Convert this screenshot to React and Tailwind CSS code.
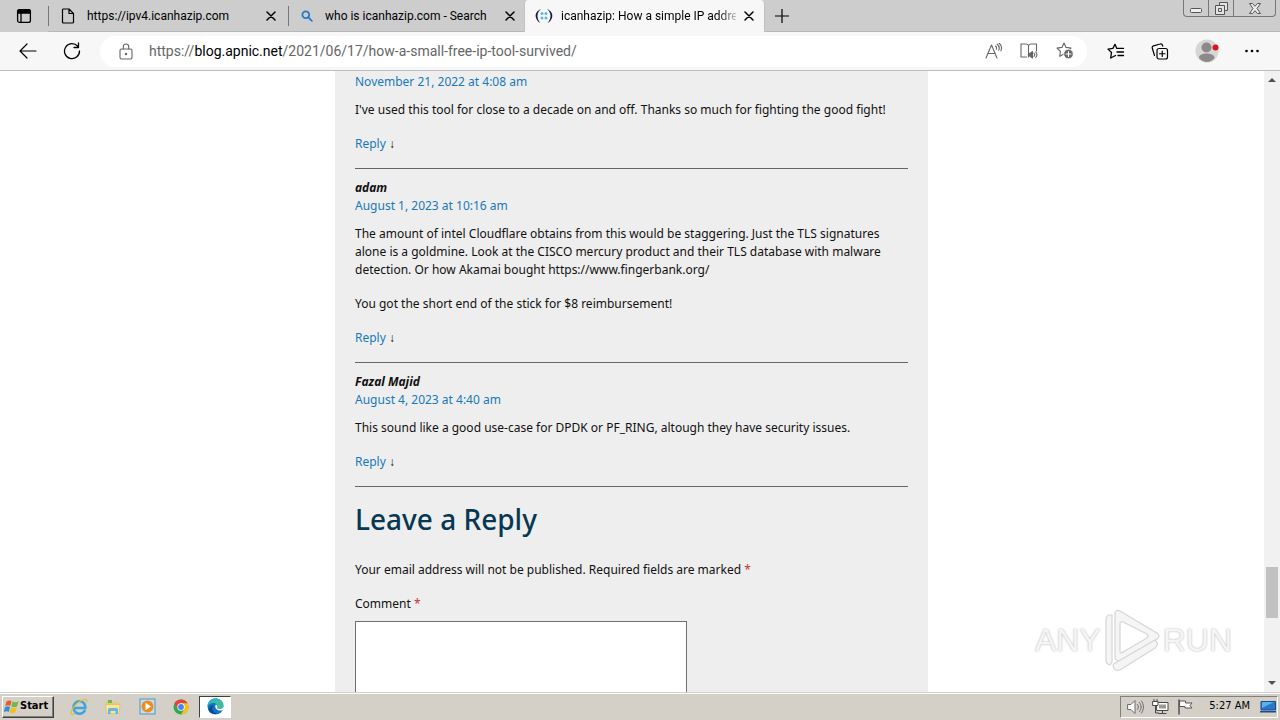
import React from "react";

const stroke = { fill: "none", stroke: "currentColor", strokeLinecap: "round", strokeLinejoin: "round" };

function CloseIcon() {
  return (
    <svg width="10" height="10" viewBox="0 0 10 10" {...stroke} strokeWidth="1.5">
      <path d="M1 1l8 8M9 1l-8 8" />
    </svg>
  );
}

function TabActionsIcon() {
  return (
    <svg width="16" height="16" viewBox="0 0 16 16" {...stroke} strokeWidth="1.3">
      <rect x="1.6" y="1.6" width="12.8" height="12.8" rx="2" />
      <path d="M1.6 3.6a2 2 0 012-2h8.800a2 2 0 012 2v1.400H1.600z" fill="currentColor" />
      <path d="M5 5v9" />
    </svg>
  );
}

function PageIcon() {
  return (
    <svg width="14" height="16" viewBox="0 0 14 16" {...stroke} strokeWidth="1.2">
      <path d="M2.500 1h5.500l4.500 4.500V14a1 1 0 01-1 1h-9a1 1 0 01-1-1V2a1 1 0 011-1zM8 1v4.500h4.500" />
    </svg>
  );
}

function SearchIcon() {
  return (
    <svg width="12" height="12" viewBox="0 0 12 12" {...stroke} stroke="#2b78c5" strokeWidth="1.8">
      <circle cx="4.800" cy="4.800" r="3.400" />
      <path d="M7.400 7.400l3.400 3.400" />
    </svg>
  );
}

function ApnicIcon() {
  return (
    <svg width="18" height="16" viewBox="0 0 18 16">
      <path d="M6 1C1.500 3 .200 6 .800 9c.4 2.600 2.200 4.800 4.700 6C3 12 2.400 10 2.500 7.500 2.600 5 3.800 3 6 1z" fill="#1c1a30" />
      <path d="M12 1c4.500 2 5.800 5 5.200 8-.4 2.600-2.200 4.800-4.700 6 2.500-3 3.100-5 3-7.500C15.400 5 14.200 3 12 1z" fill="#1c1a30" />
      <g fill="#5fb8e0">
        <circle cx="7" cy="5.500" r="1.500" /><circle cx="11" cy="5.500" r="1.500" />
        <circle cx="7" cy="10" r="1.500" /><circle cx="11" cy="10" r="1.500" />
      </g>
    </svg>
  );
}

function BackIcon() {
  return (
    <svg width="18" height="16" viewBox="0 0 18 16" {...stroke} strokeWidth="1.2">
      <path d="M8 1L1 8l7 7M1 8h16" />
    </svg>
  );
}

function ReloadIcon() {
  return (
    <svg width="18" height="18" viewBox="0 0 18 18" {...stroke} strokeWidth="1.3">
      <path d="M16.500 9A7.500 7.500 0 1114.500 4M15.500 1v4.500H11" />
    </svg>
  );
}

function LockIcon() {
  return (
    <svg width="14" height="17" viewBox="0 0 14 17" {...stroke} strokeWidth="1.1">
      <rect x="1" y="6" width="12" height="10" rx="1.500" />
      <path d="M4.300 6V3.700a2.700 2.700 0 015.400 0V6" />
      <circle cx="7" cy="11" r=".700" fill="currentColor" />
    </svg>
  );
}

function ReadAloudIcon() {
  return (
    <svg width="17" height="16" viewBox="0 0 17 16" {...stroke} strokeWidth="1.1">
      <path d="M1 15L6.500 2 12 15M3 10.500h7.200M10.500 3c1 .8 1.300 2 .8 3.200M12 1c2.200 1.700 2.700 4 1.700 6.200M14 0c2.400 2 3 5 1.900 7.800" />
    </svg>
  );
}

function ReaderIcon() {
  return (
    <svg width="18" height="16" viewBox="0 0 18 16" {...stroke} strokeWidth="1.100">
      <path d="M8.500 2.500C8 1.500 7 1 6 1H1v13h5.500M8.500 2.500C9 1.500 10 1 11 1h5.500v7M8.500 2.500V14" />
      <path d="M8.500 10.500H10l2.500-2v6.500L10 13H8.500z" fill="currentColor" />
      <path d="M14 10c.8 1 .8 2.500 0 3.500M15.800 9c1.300 1.600 1.300 4 0 5.500" />
    </svg>
  );
}

const starPath = "M8 1l2.100 4.400 4.900.700-3.500 3.400.800 4.800L8 12l-4.300 2.300.8-4.800L1 6.100l4.900-.7z";

function AddFavoriteIcon() {
  return (
    <svg width="18" height="18" viewBox="0 0 18 18" {...stroke} strokeWidth="1.100">
      <path d={starPath} />
      <circle cx="12.500" cy="12" r="4.800" fill="#666" stroke="#fff" strokeWidth=".800" />
      <path d="M12.500 9.500v5M10 12h5" stroke="#fff" />
    </svg>
  );
}

function FavoritesIcon() {
  return (
    <svg width="18" height="17" viewBox="0 0 18 17" {...stroke} strokeWidth="1.300">
      <path d="M9.800 5.400L8 1.300 5.900 5.400 1 6.100l3.500 3.400-.8 5.500L8.500 12.500M9.800 5.400H16.500M10 9h6.500M11 12.500h5.500" />
    </svg>
  );
}

function CollectionsIcon() {
  return (
    <svg width="18" height="17" viewBox="0 0 18 17" {...stroke} strokeWidth="1.200">
      <rect x="6" y="5.500" width="10.500" height="10.500" rx="2" />
      <path d="M11.250 8v5.500M8.500 10.750H14M3.500 12.500L1.300 5.300a2 2 0 011.300-2.500L9 1a2 2 0 012.500 1.300l.2.900" />
    </svg>
  );
}

function ProfileIcon() {
  return (
    <svg width="24" height="24" viewBox="0 0 24 24">
      <circle cx="12" cy="12" r="11.500" fill="#d6d6d2" />
      <circle cx="11.500" cy="8.500" r="5" fill="#8d8989" />
      <path d="M4 19c0-3 3-4.500 7.500-4.500S19.500 16 19.500 19c-2 2.500-5 4-7.500 4s-6-1.500-8-4z" fill="#8d8989" />
      <circle cx="20.500" cy="8.500" r="3" fill="#df1020" />
    </svg>
  );
}

function WindowsFlag() {
  return (
    <svg width="16" height="16" viewBox="0 0 16 16">
      <path d="M2.500 2.500C4.500 1 6 1.200 7.500 2L6.300 7C4.500 6 3 6.200 1.200 7.200z" fill="#ec5a24" />
      <path d="M8.500 2.500c2 1 4 .9 6-.3l-1.400 5c-2 1.200-3.800 1.200-5.800.2z" fill="#74b843" />
      <path d="M1 8.200c2-1.100 3.400-1.200 5-.2L4.800 13C3.200 12 1.700 12.200-.2 13.200z" fill="#2d8fd5" />
      <path d="M7 8.500c2 1 3.800 1 5.800-.2l-1.400 5c-2 1.200-3.800 1.200-5.700.2z" fill="#f6bb20" />
    </svg>
  );
}

function IeIcon() {
  return (
    <svg width="18" height="18" viewBox="0 0 18 18" fill="none">
      <path d="M15 12c-1 2.300-3 3.700-5.500 3.700-3.500 0-6-2.800-6-6.200s2.500-6.200 6-6.200 6 2.700 5.800 6.700H4.500" stroke="#3aa5df" strokeWidth="2.600" />
      <path d="M5 15.500c-2 1.700-4 1.700-4-.2C1 11 8 3 14 1.500c2.500-.6 3.500.8 2.500 3" stroke="#e8bc35" strokeWidth="1.200" />
    </svg>
  );
}

function ExplorerIcon() {
  return (
    <svg width="18" height="18" viewBox="0 0 18 18">
      <path d="M2 3h5l1 1.500h7V15H2z" fill="#e9ca68" />
      <path d="M4 2h4v3H4z" fill="#69b75a" />
      <path d="M1.500 6.500h14.500L15 15.500H2.500z" fill="#f8e59b" stroke="#d3b254" strokeWidth=".500" />
      <path d="M4 16v-4.500c0-1 1-1.500 2-1.500h6c1 0 2 .5 2 1.500V16h-2.500v-3h-5v3z" fill="#68b7df" />
    </svg>
  );
}

function MediaPlayerIcon() {
  return (
    <svg width="17" height="17" viewBox="0 0 17 17">
      <rect x="1" y="1" width="15" height="15" fill="#bfe0f3" stroke="#5692c1" />
      <circle cx="8.500" cy="8.500" r="6" fill="#f28b1d" />
      <path d="M6.500 4.800L12 8.500l-5.500 3.700z" fill="#fff" />
    </svg>
  );
}

function ChromeIcon() {
  return (
    <svg width="16" height="16" viewBox="0 0 16 16">
      <circle cx="8" cy="8" r="7.500" fill="#33a852" />
      <path d="M1.500 4.250A7.500 7.500 0 0114.500 4.250H8L4.750 9.900z" fill="#e94335" />
      <path d="M14.500 4.250A7.500 7.500 0 018 15.500l3.250-5.600L8 4.250z" fill="#fbc116" />
      <circle cx="8" cy="8" r="3.700" fill="#fff" />
      <circle cx="8" cy="8" r="2.900" fill="#4285f4" />
    </svg>
  );
}

function EdgeIcon() {
  return (
    <svg width="17" height="17" viewBox="0 0 17 17">
      <circle cx="8.500" cy="8.500" r="8" fill="#1373c4" />
      <path d="M.5 8C1 3.500 4.500.5 8.500.5c4.800 0 8 3.300 8 6.500 0 2.500-2 4-4 4-2.200 0-2.800-.9-2.200-1.700C11 7.500 9.500 5 6.500 5 3.500 5 1.200 6.500.5 8z" fill="#39bfa0" />
      <path d="M.5 8C1 3.500 4.500.5 8.500.5c2 0 3.500.5 4.800 1.500C8 1.500 3 3 .5 8z" fill="#2aaee0" />
      <path d="M9 6.500c-1.300 1.300-1 5 3 6 1.500.3 3 0 4-.6l.5-3.200c-1 1.700-2.500 2.300-4 2.300-2.200 0-2.800-.9-2.200-1.700.5-.8.200-2-1.300-2.800z" fill="#fff" />
      <path d="M6.500 7c-2 2.500-1 7 3.500 8.800-3.500.9-7-.8-8.200-3.300C1.500 9.500 4 7 6.500 7z" fill="#0c4b92" />
    </svg>
  );
}

function VolumeIcon() {
  return (
    <svg width="17" height="16" viewBox="0 0 17 16" {...stroke} stroke="#6b6b6b">
      <path d="M1 5.500h3l4-4v13l-4-4H1z" fill="#fff" />
      <path d="M10.500 5.500c1.200 1.500 1.200 3.500 0 5M12.500 3.500c2.200 2.700 2.200 6.300 0 9M14.500 2c2.600 3.500 2.600 8.500 0 12" />
    </svg>
  );
}

function NetworkIcon() {
  return (
    <svg width="17" height="16" viewBox="0 0 17 16" {...stroke} stroke="#484848">
      <rect x="5" y="3.500" width="11" height="8" fill="#fff" />
      <rect x="7" y="5.500" width="7" height="4" fill="#999" stroke="none" />
      <path d="M10.500 11.500V14M7 14.500h7M3.500 7v7h3" />
      <path d="M1 2.500h5v4H1zM2 .5v2M5 .5v2" fill="#fff" />
    </svg>
  );
}

function FlagIcon() {
  return (
    <svg width="16" height="16" viewBox="0 0 16 16" {...stroke} stroke="#555">
      <path d="M2 1v14" strokeWidth="1.500" />
      <path d="M3 2h5.500v2H15l-2 2.500L15 9H8V7.500H3z" fill="#fff" />
    </svg>
  );
}

function DesktopIcon() {
  return (
    <svg width="16" height="14" viewBox="0 0 16 14">
      <path d="M1 1.500h14.500V10H1z" fill="#2878c9" stroke="#184b8a" />
      <path d="M2 2h12L2 8z" fill="#62aee9" />
      <path d="M0 11h16v1.500H0z" fill="#1c4d88" />
    </svg>
  );
}

function PlayMark() {
  return (
    <svg width="58" height="64" viewBox="0 0 58 64" fill="#f5f5f5" stroke="#d6d6d6" strokeWidth="1.200" strokeLinejoin="round">
      <path d="M3 12q0-5 4-5h2v47l-2 3q-4-1-4-5z" />
      <path fillRule="evenodd" d="M12 5q1-4 5-2l37 22q4 3 0 6L20 52q-8 3-8-4zM17 16v27q0 3 3 1l24-14q2-2 0-4L20 14q-3-1-3 2z" />
      <path d="M10 57q1-2 4-3l38-22q5 4 0 8L17 62q-6 2-7-5z" />
    </svg>
  );
}

const tabs = [
  { title: "https://ipv4.icanhazip.com", icon: <PageIcon />, box: "w-[238px] pl-3 pr-[10px] gap-3" },
  { title: "who is icanhazip.com - Search", icon: <SearchIcon />, box: "w-[238px] pl-[14px] pr-[9px] gap-3" },
  { title: "icanhazip: How a simple IP addre", icon: <ApnicIcon />, active: true, box: "w-[241px] pl-[10px] pr-[10px] gap-2 rounded-t bg-[#f7f7f7] border-x border-[#c2c2c2]" },
];

function TabStrip() {
  return (
    <div className="flex h-8 shrink-0 items-stretch bg-[#cdcdcd] font-['Roboto','Noto_Sans',sans-serif] text-xs text-black">
      <button aria-label="Tab actions" className="flex w-12 shrink-0 items-center justify-center"><TabActionsIcon /></button>
      {tabs.map((tab) => (
        <div key={tab.title} className={`flex min-w-0 items-center ${tab.box} ${tab.active ? "" : "border-b border-b-[#b8b8b8]"}`}>
          {!tab.active && <span className="-ml-3 h-5 w-px shrink-0 bg-[#777]" />}
          <span className="shrink-0">{tab.icon}</span>
          <span className={`min-w-0 flex-1 whitespace-nowrap ${tab.active ? "bg-linear-to-r from-black from-88% to-[#c8c8c8] bg-clip-text text-transparent" : ""}`}>{tab.title}</span>
          <button aria-label={`Close ${tab.title}`} className="shrink-0"><CloseIcon /></button>
        </div>
      ))}
      <div className="flex flex-1 items-start justify-between border-b border-[#b8b8b8]">
        <button aria-label="New tab" className="flex h-8 w-[34px] items-center justify-center">
          <svg width="14" height="14" viewBox="0 0 14 14" {...stroke} strokeWidth="1.200"><path d="M7 0v14M0 7h14" /></svg>
        </button>
        <div className="mr-1 flex h-[17px] divide-x divide-[#777] rounded-b border-x border-b border-[#777] text-[#555]">
          <button aria-label="Minimize" className="flex w-[25px] items-end justify-center pb-[3px]">
            <svg width="12" height="5" viewBox="0 0 12 5"><rect x=".5" y=".5" width="11" height="4" rx="1" fill="#eee" stroke="currentColor" /></svg>
          </button>
          <button aria-label="Restore" className="flex w-[25px] items-center justify-center">
            <svg width="13" height="13" viewBox="0 0 13 13" fill="#e4e4e4" stroke="currentColor"><path d="M4.500.5h8v8h-8z" /><path d="M.5 3.500h9v9h-9zM3.500 6.500h3v3h-3z" /></svg>
          </button>
          <button aria-label="Close window" className="flex w-[41px] items-center justify-center">
            <svg width="12" height="11" viewBox="0 0 12 11" fill="#eee" stroke="currentColor"><path d="M.5.5h3L6 3.300 8.500.5h3L8 5.500l3.500 5h-3L6 7.700 3.500 10.500h-3L4 5.500z" /></svg>
          </button>
        </div>
      </div>
    </div>
  );
}

function Toolbar() {
  return (
    <div className="flex h-[39px] shrink-0 items-center border-b border-[#bdbdbd] bg-[#f7f7f7] pr-[21px] pl-[19px] text-black">
      <button aria-label="Back" className="mr-[26px]"><BackIcon /></button>
      <button aria-label="Reload" className="mr-[19px]"><ReloadIcon /></button>
      <div className="flex h-[31px] min-w-0 flex-1 items-center rounded-full bg-white pr-[13px] pl-[19px] text-[#666]">
        <LockIcon />
        <a href="https://blog.apnic.net/2021/06/17/how-a-small-free-ip-tool-survived/" className="ml-4 min-w-0 flex-1 truncate font-['Roboto','Noto_Sans',sans-serif] text-sm">
          https://<span className="text-black">blog.apnic.net</span>/2021/06/17/how-a-small-free-ip-tool-survived/
        </a>
        <div className="flex items-center gap-[18px]">
          <button aria-label="Read aloud"><ReadAloudIcon /></button>
          <button aria-label="Immersive reader"><ReaderIcon /></button>
          <button aria-label="Add to favorites"><AddFavoriteIcon /></button>
        </div>
      </div>
      <div className="ml-5 flex items-center gap-[26px]">
        <button aria-label="Favorites"><FavoritesIcon /></button>
        <button aria-label="Collections"><CollectionsIcon /></button>
        <button aria-label="Profile"><ProfileIcon /></button>
        <button aria-label="Settings and more">
          <svg width="14" height="4" viewBox="0 0 14 4"><circle cx="1.500" cy="2" r="1.300" /><circle cx="7" cy="2" r="1.300" /><circle cx="12.500" cy="2" r="1.300" /></svg>
        </button>
      </div>
    </div>
  );
}

const comments = [
  { date: "November 21, 2022 at 4:08 am", text: ["I've used this tool for close to a decade on and off. Thanks so much for fighting the good fight!"] },
  {
    name: "adam",
    date: "August 1, 2023 at 10:16 am",
    text: [
      "The amount of intel Cloudflare obtains from this would be staggering. Just the TLS signatures alone is a goldmine. Look at the CISCO mercury product and their TLS database with malware detection. Or how Akamai bought https://www.fingerbank.org/",
      "You got the short end of the stick for $8 reimbursement!",
    ],
  },
  { name: "Fazal Majid", date: "August 4, 2023 at 4:40 am", text: ["This sound like a good use-case for DPDK or PF_RING, altough they have security issues."] },
];

function Comment({ name, date, text }) {
  return (
    <article className={`border-b border-[#666] pb-[15px] ${name ? "pt-[10px]" : "pt-[2px]"}`}>
      {name && <h3 className="font-bold italic">{name}</h3>}
      <a href="#comment" className="block text-[#1779ba]">{date}</a>
      <div className="mt-[10px] flex flex-col gap-4">
        {text.map((p) => <p key={p}>{p}</p>)}
        <p><a href="#respond" className="text-[#1779ba]">Reply</a> ↓</p>
      </div>
    </article>
  );
}

function Scrollbar() {
  return (
    <div aria-hidden="true" className="flex w-4 shrink-0 flex-col items-center justify-between bg-[#f1f1f1] py-[6px]">
      <svg width="8" height="6" viewBox="0 0 8 6" fill="#505050"><path d="M0 5l4-4 4 4z" /></svg>
      <div className="flex w-full flex-1 flex-col px-[2px]">
        <div className="grow-[484]" />
        <div className="h-[51px] bg-[#c1c1c1]" />
        <div className="grow-[62]" />
      </div>
      <svg width="8" height="6" viewBox="0 0 8 6" fill="#505050"><path d="M0 1l4 4 4-4z" /></svg>
    </div>
  );
}

function Watermark() {
  return (
    <div className="pointer-events-none absolute right-12 bottom-5 flex items-center gap-[2px] font-['Liberation_Sans',sans-serif] text-[32px] leading-none text-[#f5f5f5] [text-shadow:0_0_2px_#aaa]">
      <span>ANY</span>
      <PlayMark />
      <span>RUN</span>
    </div>
  );
}

const apps = [
  { label: "Internet Explorer", icon: <IeIcon /> },
  { label: "Windows Explorer", icon: <ExplorerIcon /> },
  { label: "Windows Media Player", icon: <MediaPlayerIcon /> },
  { label: "Google Chrome", icon: <ChromeIcon /> },
  { label: "Microsoft Edge", icon: <EdgeIcon />, active: true },
];

function Taskbar() {
  return (
    <footer className="flex h-7 shrink-0 items-center justify-between border-t border-[#d4d0c8] bg-[#d4d0c8] pl-[2px] font-['DejaVu_Sans_Condensed','DejaVu_Sans',sans-serif] text-[11px] text-black shadow-[inset_0_1px_0_#fff]">
      <div className="flex items-center">
        <button className="mr-[9px] flex h-[22px] w-[52px] items-center border border-t-white border-r-[#404040] border-b-[#404040] border-l-white pl-px font-bold shadow-[inset_-1px_-1px_0_#808080]">
          <WindowsFlag /><span>Start</span>
        </button>
        {apps.map((app) => (
          <button key={app.label} aria-label={app.label} className={`mr-[2px] flex h-[22px] w-8 items-center justify-center ${app.active ? "border border-t-[#404040] border-r-white border-b-white border-l-[#404040] bg-white" : ""}`}>
            {app.icon}
          </button>
        ))}
      </div>
      <div className="mr-[2px] flex h-[22px] items-center border border-t-[#808080] border-r-white border-b-white border-l-[#808080] pr-px pl-[6px]">
        <div className="mr-4 flex gap-2"><VolumeIcon /><NetworkIcon /><FlagIcon /></div>
        <time className="mr-[10px]">5:27 AM</time>
        <DesktopIcon />
      </div>
    </footer>
  );
}

export default function App() {
  return (
    <div className="flex h-screen flex-col overflow-hidden bg-white font-['Noto_Sans','Open_Sans',sans-serif]">
      <header>
        <TabStrip />
        <Toolbar />
      </header>
      <div className="relative flex min-h-0 flex-1">
        <main className="min-w-0 flex-1 overflow-hidden pr-px">
          <section className="mx-auto min-h-full w-full max-w-[593px] bg-[#eee] px-5 text-xs leading-[18px] text-[#111]">
            {comments.map((c) => <Comment key={c.date} {...c} />)}
            <h2 className="pt-3 text-[28px] leading-[40px] font-medium text-[#063852]">Leave a Reply</h2>
            <form>
              <p className="mt-[22px]">Your email address will not be published. Required fields are marked <span className="text-[#c0392b]">*</span></p>
              <label htmlFor="comment" className="mt-4 mb-2 block">Comment <span className="text-[#c0392b]">*</span></label>
              <textarea id="comment" rows="8" className="block w-full max-w-[332px] resize-none border border-[#707070] bg-white p-1" />
            </form>
          </section>
        </main>
        <Scrollbar />
        <Watermark />
      </div>
      <Taskbar />
    </div>
  );
}
